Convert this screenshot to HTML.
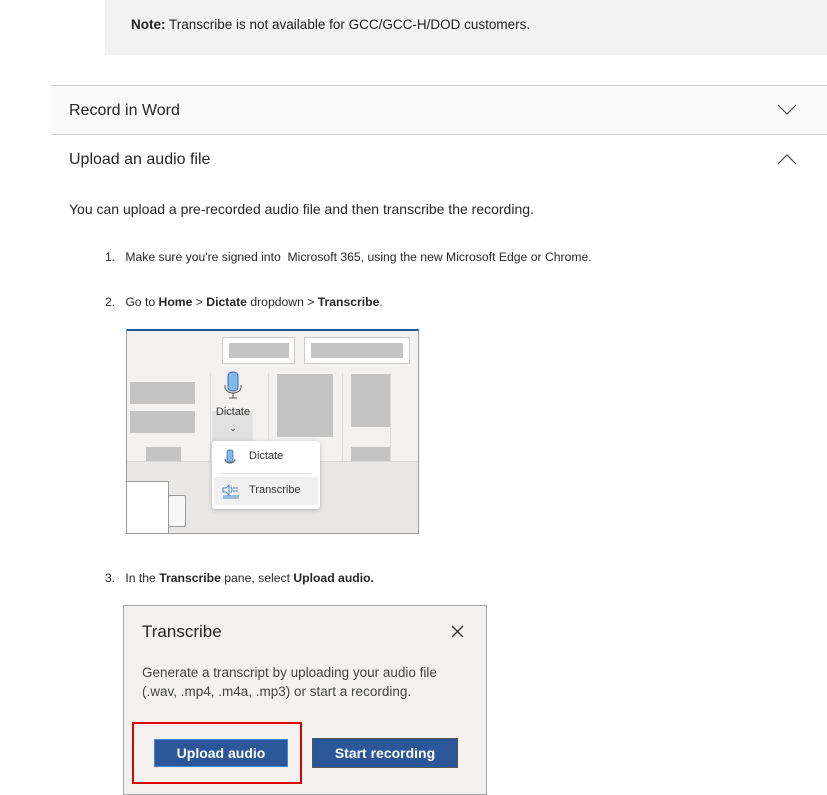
<!DOCTYPE html>
<html><head><meta charset="utf-8"><style>
*{margin:0;padding:0;box-sizing:border-box}
body{width:827px;height:784px;background:#fff;font-family:"Liberation Sans",sans-serif;color:#262626;position:relative;overflow:hidden}
.a{position:absolute}
.g{position:absolute;background:#c4c4c4}
</style></head><body>
<div class="a" style="left:105px;top:0;width:722px;height:55px;background:#f2f2f2"></div>
<div class="a" style="left:131px;top:17px;font-size:13.5px;color:#1e1e1e"><b>Note:</b> Transcribe is not available for GCC/GCC-H/DOD customers.</div>
<div class="a" style="left:51px;top:85px;width:776px;height:50px;background:#fafafa;border-top:1px solid #d2d2d2;border-bottom:1px solid #d2d2d2"></div>
<div class="a" style="left:69px;top:102px;font-size:16px">Record in Word</div>
<svg class="a" style="left:777px;top:104px" width="20" height="12"><path d="M1 1l9 9 9-9" fill="none" stroke="#444" stroke-width="1.2"/></svg>
<div class="a" style="left:69px;top:151px;font-size:16px">Upload an audio file</div>
<svg class="a" style="left:777px;top:153px" width="20" height="12"><path d="M1 11l9-9 9 9" fill="none" stroke="#444" stroke-width="1.2"/></svg>
<div class="a" style="left:69px;top:201px;font-size:14px">You can upload a pre-recorded audio file and then transcribe the recording.</div>
<div class="a" style="left:105px;top:250px;font-size:12.2px">1.&nbsp;&nbsp; Make sure you're signed into&nbsp; Microsoft 365, using the new Microsoft Edge or Chrome.</div>
<div class="a" style="left:105px;top:295px;font-size:12.2px">2.&nbsp;&nbsp; Go to <b>Home</b> &gt; <b>Dictate</b> dropdown &gt; <b>Transcribe</b>.</div>
<div class="a" style="left:126px;top:329px;width:293px;height:205px;background:#f3f2f1;border:1px solid #9a9a9a;border-top:2px solid #2b579a;overflow:hidden">
 <div class="a" style="left:0;top:130px;width:293px;height:75px;background:#e9e8e7;border-top:1px solid #d6d6d6"></div>
 <div class="a" style="left:-1px;top:150px;width:43px;height:55px;background:#fff;border:1px solid #9a9a9a"></div>
 <div class="a" style="left:41px;top:164px;width:18px;height:32px;background:#f7f7f7;border:1px solid #9a9a9a;border-radius:2px"></div>
 <div class="a" style="left:95px;top:6px;width:73px;height:27px;background:#fff;border:1px solid #ccc"></div><div class="g" style="left:102px;top:12px;width:60px;height:15px"></div>
 <div class="a" style="left:177px;top:6px;width:106px;height:27px;background:#fff;border:1px solid #ccc"></div><div class="g" style="left:184px;top:12px;width:92px;height:15px"></div>
 <div class="g" style="left:3px;top:51px;width:65px;height:22px"></div>
 <div class="g" style="left:3px;top:80px;width:65px;height:22px"></div>
 <div class="g" style="left:19px;top:116px;width:35px;height:14px"></div>
 <div class="a" style="left:83px;top:42px;width:1px;height:88px;background:#ddd"></div>
 <div class="a" style="left:141px;top:42px;width:1px;height:88px;background:#ddd"></div>
 <div class="a" style="left:215px;top:42px;width:1px;height:88px;background:#ddd"></div>
 <div class="a" style="left:263px;top:42px;width:1px;height:88px;background:#ddd"></div>
 <div class="g" style="left:150px;top:43px;width:56px;height:63px"></div>
 <div class="g" style="left:224px;top:43px;width:39px;height:53px"></div>
 <div class="g" style="left:224px;top:116px;width:39px;height:14px"></div>
 <div class="a" style="left:85px;top:80px;width:41px;height:37px;background:#e1e1e1"></div>
 <svg class="a" style="left:96px;top:40px" width="20" height="30"><rect x="5" y="1" width="10" height="19" rx="4" fill="#7fb9ee" stroke="#3a6fa8"/><path d="M2 14v2a8 6 0 0 0 16 0v-2M10 22v5M6 27h8" fill="none" stroke="#555" stroke-width="1"/></svg>
 <div class="a" style="left:86px;top:75px;font-size:11px;color:#333;width:40px;text-align:center">Dictate</div>
 <div class="a" style="left:86px;top:92px;font-size:9px;color:#333;width:40px;text-align:center">⌄</div>
 <div class="a" style="left:85px;top:110px;width:108px;height:68px;background:#fff;border-radius:3px;box-shadow:0 1px 5px rgba(0,0,0,.25)">
  <svg class="a" style="left:12px;top:8px" width="12" height="17"><rect x="3" y="1" width="6" height="12" rx="2" fill="#7fb9ee" stroke="#3a6fa8" stroke-width=".8"/><path d="M1 10a5 4 0 0 0 10 0" fill="none" stroke="#555"/></svg>
  <div class="a" style="left:37px;top:9px;font-size:11px;color:#333">Dictate</div>
  <div class="a" style="left:9px;top:32px;width:90px;height:1px;background:#ddd"></div>
  <div class="a" style="left:2px;top:36px;width:104px;height:28px;background:#f0f0f0"></div>
  <svg class="a" style="left:10px;top:42px" width="18" height="16"><path d="M1 5h3l3-3v10l-3-3H1z M9 4q2 3 0 6 M11 5h5M11 8h5M1 13h16M1 15h16" fill="none" stroke="#4a86c7" stroke-width="1"/></svg>
  <div class="a" style="left:37px;top:43px;font-size:11px;color:#333">Transcribe</div>
 </div>
</div>
<div class="a" style="left:105px;top:571px;font-size:12.2px">3.&nbsp;&nbsp; In the <b>Transcribe</b> pane, select <b>Upload audio.</b></div>
<div class="a" style="left:123px;top:605px;width:364px;height:190px;background:#f3f2f1;border:1px solid #a6a6a6"></div>
<div class="a" style="left:142px;top:622px;font-size:17px;color:#222">Transcribe</div>
<svg class="a" style="left:451px;top:625px" width="13" height="13"><path d="M1 1l11 11M12 1L1 12" stroke="#333" stroke-width="1.4"/></svg>
<div class="a" style="left:142px;top:663px;font-size:13.5px;line-height:19px;color:#444">Generate a transcript by uploading your audio file<br>(.wav, .mp4, .m4a, .mp3) or start a recording.</div>
<div class="a" style="left:132px;top:722px;width:170px;height:62px;border:2px solid #e00000"></div>
<div class="a" style="left:154px;top:739px;width:134px;height:28px;background:#2b579a;border:1px solid #4a86d8;color:#fff;font-weight:bold;font-size:14px;text-align:center;line-height:26px">Upload audio</div>
<div class="a" style="left:312px;top:738px;width:146px;height:30px;background:#2b579a;border:1px solid #555;color:#fff;font-weight:bold;font-size:14px;text-align:center;line-height:28px">Start recording</div>
</body></html>
